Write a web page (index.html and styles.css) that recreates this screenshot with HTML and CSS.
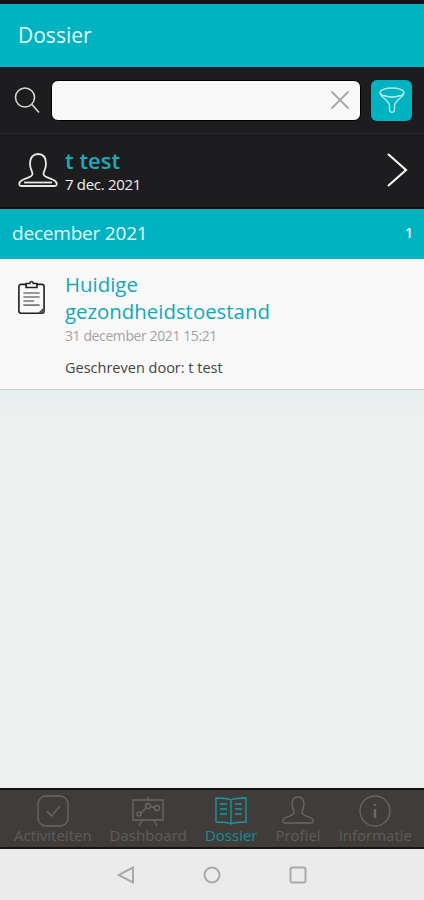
FILE: index.html
```html
<!DOCTYPE html>
<html lang="nl">
<head>
    <meta charset="UTF-8">
    <meta name="viewport" content="width=device-width, initial-scale=1.0">
    <title>Dossier</title>
    <link rel="stylesheet" href="styles.css">
</head>
<body>
    <div class="app">
        <header class="title-bar">Dossier</header>

        <div class="search-bar">
            <svg class="search-icon" width="28" height="28" viewBox="0 0 28 28">
                <circle cx="11" cy="11.500" r="9.500"/>
                <path d="M18 18.500l7 8"/>
            </svg>
            <div class="search-input">
                <svg width="20" height="20" viewBox="0 0 20 20">
                    <path d="M1.500 1.500l17 17M18.500 1.500l-17 17"/>
                </svg>
            </div>
            <div class="filter-button">
                <svg width="28" height="28" viewBox="0 0 28 28">
                    <ellipse cx="14" cy="6.500" rx="12" ry="4.500"/>
                    <path d="M2 7c1 5 8 6 9.500 12v5c0 3 5 3 5 0v-5C18 13 25 12 26 7"/>
                    <path d="M6 9c3 2.500 13 2.500 16 0"/>
                </svg>
            </div>
        </div>

        <div class="patient-row">
            <svg class="patient-icon" width="40" height="36" viewBox="0 0 40 36">
                <path d="M12 12C12 5 15.500 2 20 2s8 3 8 10c0 5-2.500 7-2.500 10 0 3 6 4 10 6 3 1.500 3.500 3.500 3 5-.3.700-1 1-2 1H3.500c-1 0-1.700-.3-2-1-.5-1.500 0-3.500 3-5 4-2 10-3 10-6 0-3-2.500-5-2.500-10z"/>
                <path d="M6 30.500h28"/>
            </svg>
            <div class="patient-text">
                <div class="patient-name">t test</div>
                <div class="patient-date">7 dec. 2021</div>
            </div>
            <svg class="chevron" width="22" height="36" viewBox="0 0 22 36">
                <path d="M2 2l18 16L2 34"/>
            </svg>
        </div>

        <div class="month-bar">
            <span class="month-name">december 2021</span>
            <span class="month-count">1</span>
        </div>

        <div class="entry">
            <svg class="entry-icon" width="27" height="36" viewBox="0 0 30 38">
                <path class="thick" d="M9 5H3.500C2 5 1 6 1 7.500v27C1 36 2 37 3.500 37h23c1.500 0 2.500-1 2.500-2.500v-27C29 6 28 5 26.500 5H21"/>
                <path class="thick" d="M9 8.500V4h4c.5-3 3.500-3 4 0h4v4.500z"/>
                <path class="lines" d="M6 14.500h18M6 19h18M6 23.500h12M6 28h18"/>
                <path class="corner" d="M29 30l-7 7h5l2-2z"/>
            </svg>
            <div class="entry-text">
                <div class="entry-title">Huidige gezondheidstoestand</div>
                <div class="entry-date">31 december 2021 15:21</div>
                <div class="entry-author">Geschreven door: t test</div>
            </div>
        </div>

        <main class="empty"></main>

        <nav class="tabs">
            <div class="tab">
                <svg width="32" height="32" viewBox="0 0 32 32">
                    <rect x="1" y="1" width="30" height="30" rx="8"/>
                    <path d="M10 16l4.500 5L23 11"/>
                </svg>
                <span>Activiteiten</span>
            </div>
            <div class="tab">
                <svg width="32" height="32" viewBox="0 0 32 32">
                    <path d="M1 5h30v20H1zM16 2v3M10 25l-3 6M22 25l3 6"/>
                    <circle cx="7" cy="19" r="2"/>
                    <circle cx="16" cy="11" r="2.500"/>
                    <circle cx="25" cy="13" r="2.500"/>
                    <path d="M9 18l5-5M18.500 11.500l4 1"/>
                </svg>
                <span>Dashboard</span>
            </div>
            <div class="tab active">
                <svg width="32" height="32" viewBox="0 0 32 32">
                    <path d="M16 5c-3-2-9-2-15-2v24c6 0 12 0 15 2 3-2 9-2 15-2V3c-6 0-12 0-15 2zM16 5v24"/>
                    <path d="M5 9h7M5 14h7M5 19h7M20 9h7M20 14h7M20 19h7"/>
                </svg>
                <span>Dossier</span>
            </div>
            <div class="tab">
                <svg width="32" height="32" viewBox="0 0 32 32">
                    <path d="M10 9c0-5 2.500-7 6-7s6 2 6 7c0 4-2 6-2 8.500 0 2.500 4 3.500 8 5 3 1.200 3.500 3 3 4.500-.3.800-1 1-2 1H3c-1 0-1.700-.2-2-1-.5-1.500 0-3.300 3-4.500 4-1.500 8-2.500 8-5C12 15 10 13 10 9z"/>
                </svg>
                <span>Profiel</span>
            </div>
            <div class="tab">
                <svg width="32" height="32" viewBox="0 0 32 32">
                    <circle cx="16" cy="16" r="15"/>
                    <path class="info" d="M16 14v9M16 9v2"/>
                </svg>
                <span>Informatie</span>
            </div>
        </nav>

        <div class="system-bar">
            <svg width="18" height="18" viewBox="0 0 18 18">
                <path d="M16 1.500v15L1.500 9z"/>
            </svg>
            <svg width="18" height="18" viewBox="0 0 18 18">
                <circle cx="9" cy="9" r="7.500"/>
            </svg>
            <svg width="18" height="18" viewBox="0 0 18 18">
                <rect x="1.500" y="1.500" width="15" height="15" rx="2"/>
            </svg>
        </div>
    </div>
</body>
</html>
```

FILE: styles.css
```css
* {
    box-sizing: border-box;
}

html,
body {
    margin: 0;
    height: 100%;
}

body {
    font-family: "Open Sans", "Noto Sans", sans-serif;
    background-color: #eef0f0;
    color: #333333;
}

svg {
    display: block;
    flex-shrink: 0;
    fill: none;
}

.app {
    display: flex;
    flex-direction: column;
    height: 900px;
}

.title-bar {
    height: 67px;
    padding: 4px 0 0 18px;
    border-top: 4px solid #141414;
    background-color: #00b3c1;
    color: #e4f7f8;
    font-size: 21px;
    line-height: 55px;
}

.search-bar {
    display: flex;
    align-items: center;
    height: 67px;
    padding: 0 12px 0 14px;
    border-bottom: 1px solid #2c2d2e;
    background-color: #1d1d1f;
}

.search-icon {
    stroke: #d6d6d6;
    stroke-width: 1.600;
}

.search-input {
    display: flex;
    align-items: center;
    justify-content: flex-end;
    width: 310px;
    height: 41px;
    margin-left: 9px;
    padding-right: 10px;
    border: 1px solid #000000;
    border-radius: 7px;
    background-color: #f8f8f8;
    stroke: #a8a8a8;
    stroke-width: 1.800;
}

.filter-button {
    display: flex;
    align-items: center;
    justify-content: center;
    width: 41px;
    height: 41px;
    margin-left: 10px;
    border-radius: 6px;
    background-color: #00b3c1;
    stroke: #b4e8ec;
    stroke-width: 1.300;
}

.patient-row {
    display: flex;
    align-items: center;
    height: 75px;
    padding: 0 16px 2px 18px;
    border-bottom: 2px solid #0c0c0c;
    background-color: #1d1d1f;
}

.patient-icon {
    stroke: #e8e8e8;
    stroke-width: 1.800;
}

.patient-text {
    flex: 1;
    margin-left: 7px;
}

.patient-name {
    color: #1fa9b8;
    font-size: 22px;
    font-weight: 600;
    line-height: 28px;
}

.patient-date {
    color: #f0f0f0;
    font-size: 15px;
    line-height: 20px;
    letter-spacing: -0.3px;
}

.chevron {
    stroke: #f2f2f2;
    stroke-width: 2.200;
}

.month-bar {
    display: flex;
    align-items: center;
    justify-content: space-between;
    height: 50px;
    padding: 0 11px 3px 12px;
    background-color: #00b3c1;
    color: #e4f7f8;
    font-weight: 500;
}

.month-name {
    font-size: 19px;
    letter-spacing: -0.2px;
}

.month-count {
    font-size: 14px;
    font-weight: 600;
}

.entry {
    display: flex;
    height: 131px;
    padding: 12px 0 0 18px;
    border-bottom: 1px solid #c9d1d1;
    background-color: #f8f8f8;
}

.entry-icon {
    margin-top: 8px;
    stroke: #202020;
}

.entry-icon .thick {
    stroke-width: 1.800;
}

.entry-icon .lines {
    stroke: #777777;
    stroke-width: 1.800;
}

.entry-icon .corner {
    fill: #555555;
    stroke: none;
}

.entry-text {
    width: 230px;
    margin-left: 20px;
}

.entry-title {
    color: #12a8b8;
    font-size: 20.400px;
    line-height: 27px;
}

.entry-date {
    margin-top: 1px;
    color: #a3a3a3;
    font-size: 14px;
    line-height: 20px;
    letter-spacing: -0.4px;
    white-space: nowrap;
}

.entry-author {
    margin-top: 12px;
    color: #444444;
    font-size: 14.500px;
    line-height: 20px;
    white-space: nowrap;
}

.empty {
    flex: 1;
    background: linear-gradient(#e5eeee, #eef0f0 22px);
}

.tabs {
    display: flex;
    justify-content: space-between;
    height: 61px;
    padding: 0 12px 0 14px;
    border-top: 2px solid #0e0e0e;
    border-bottom: 2px solid #141414;
    background-color: #3f3c3a;
    color: #5e5d5b;
}

.tab {
    display: flex;
    flex-direction: column;
    align-items: center;
    padding-top: 5px;
    font-size: 15px;
    line-height: 18px;
    stroke: #6a6967;
    stroke-width: 1.300;
}

.tab.active {
    color: #158f94;
    stroke: #159da3;
}

.tab svg .info {
    stroke-width: 2.500;
}

.tab span {
    margin-top: -1px;
}

.system-bar {
    display: flex;
    align-items: center;
    justify-content: center;
    gap: 68px;
    height: 51px;
    background-color: #ebebeb;
    stroke: #a9a9a9;
    stroke-width: 2;
}
```
